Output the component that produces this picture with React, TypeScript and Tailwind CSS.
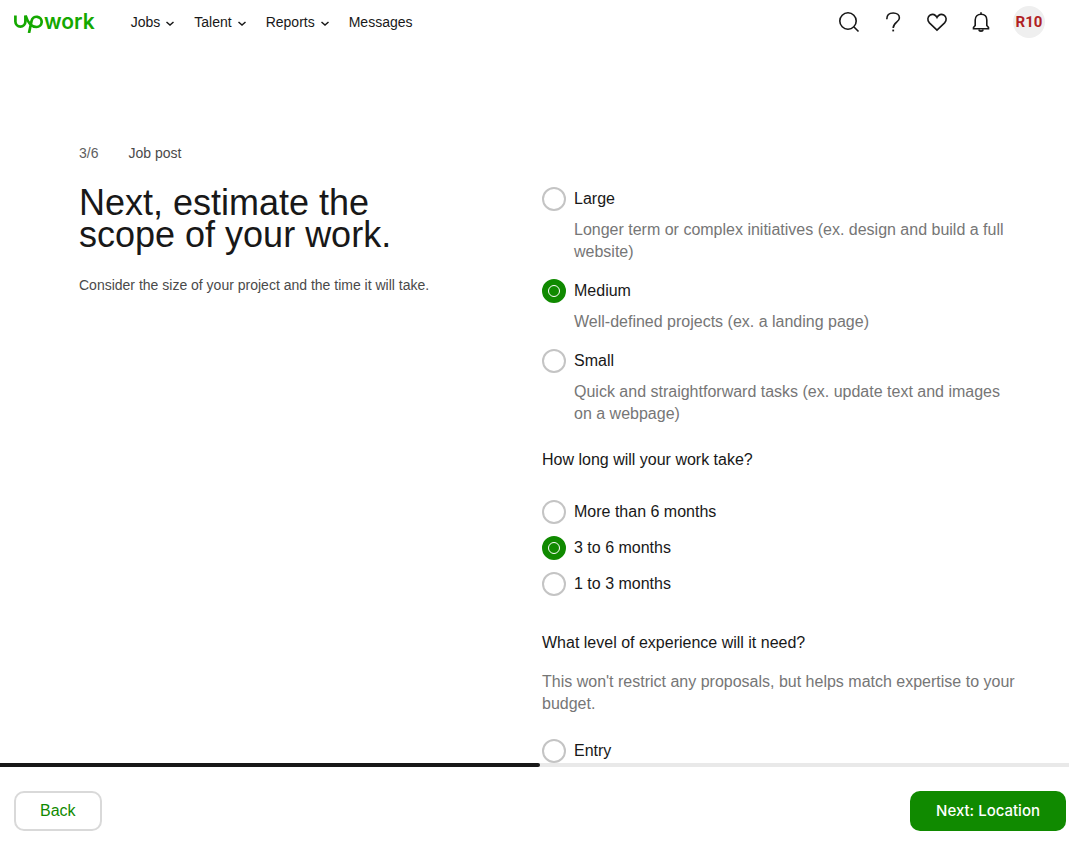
import { useState } from "react";

type Option = { value: string; label: string; description?: string };

const sizes: Option[] = [
  { value: "large", label: "Large", description: "Longer term or complex initiatives (ex. design and build a full website)" },
  { value: "medium", label: "Medium", description: "Well-defined projects (ex. a landing page)" },
  { value: "small", label: "Small", description: "Quick and straightforward tasks (ex. update text and images on a webpage)" },
];

const durations: Option[] = [
  { value: "6plus", label: "More than 6 months" },
  { value: "3to6", label: "3 to 6 months" },
  { value: "1to3", label: "1 to 3 months" },
];

const levels: Option[] = [{ value: "entry", label: "Entry" }];

function RadioGroup({
  name,
  legend,
  options,
  value,
  onChange,
  className,
}: {
  name: string;
  legend: string;
  options: Option[];
  value: string;
  onChange: (value: string) => void;
  className: string;
}) {
  return (
    <div role="radiogroup" aria-label={legend} className={className}>
      {options.map((option) => (
        <div key={option.value}>
          <label className="flex items-center gap-2 text-base leading-6">
            <span className="grid size-6 shrink-0">
              <input
                type="radio"
                name={name}
                value={option.value}
                checked={value === option.value}
                onChange={() => onChange(option.value)}
                className="col-start-1 row-start-1 size-6 appearance-none rounded-full border-2 border-[#c4c4c4] bg-white checked:border-[#108a00] checked:bg-[#108a00]"
              />
              {value === option.value && (
                <span className="pointer-events-none col-start-1 row-start-1 size-3 place-self-center rounded-full border border-white" />
              )}
            </span>
            {option.label}
          </label>
          {option.description && (
            <p className="mt-2 pl-8 text-base leading-[22px] text-[#767676]">{option.description}</p>
          )}
        </div>
      ))}
    </div>
  );
}

function Chevron() {
  return (
    <svg viewBox="0 0 8 6" className="mt-1 h-1.5 w-2" fill="none" stroke="currentColor" strokeWidth="1.5" aria-hidden="true">
      <path d="M0.5 1 L4 4 L7.5 1" />
    </svg>
  );
}

function BrandMark() {
  return (
    <svg viewBox="0 0 30 18" className="mt-1 h-[18px] w-[30px]" fill="none" stroke="currentColor" strokeWidth="2.7" aria-hidden="true">
      <path d="M1.4 0.6 V6.6 A5 5 0 0 0 11.4 6.6 V0.6" />
      <path d="M11.6 0.6 C13.4 6.4 17 12 22.6 12 A5.1 5.1 0 1 0 17.6 5.8 L15 18" />
    </svg>
  );
}

const iconProps = {
  viewBox: "0 0 24 24",
  className: "size-6",
  fill: "none",
  stroke: "currentColor",
  strokeWidth: 1.6,
  "aria-hidden": true,
} as const;

export default function App() {
  const [size, setSize] = useState("medium");
  const [duration, setDuration] = useState("3to6");
  const [level, setLevel] = useState("");

  return (
    <div className="flex min-h-screen flex-col bg-white font-['Liberation_Sans',Arial,sans-serif] text-[#181818]">
      <header className="flex h-11 items-center justify-between pr-6 pl-3.5">
        <div className="flex items-center gap-9">
          <a href="#" aria-label="upwork" className="flex items-center text-[#14a800]">
            <BrandMark />
            <span className="font-['Inter',sans-serif] text-[21px] leading-6 font-semibold">work</span>
          </a>
          <nav className="flex items-center gap-5 text-sm leading-5">
            {["Jobs", "Talent", "Reports"].map((item) => (
              <button key={item} type="button" className="flex items-center gap-1.5">
                {item}
                <Chevron />
              </button>
            ))}
            <a href="#">Messages</a>
          </nav>
        </div>
        <div className="flex items-center gap-5">
          <button type="button" aria-label="Search">
            <svg {...iconProps}>
              <circle cx="11" cy="11" r="8.2" />
              <path d="M17 17 L21.5 21.5" />
            </svg>
          </button>
          <button type="button" aria-label="Help">
            <svg {...iconProps}>
              <path d="M5.8 9.2 C5.8 5.2 8.4 3 12.2 3 C16 3 18.4 5.2 18.4 8 C18.4 12 12.2 12.6 12.2 18" />
              <path d="M12.2 19.6 V21.4" strokeWidth="1.8" />
            </svg>
          </button>
          <button type="button" aria-label="Saved">
            <svg {...iconProps}>
              <path d="M12 20.2 L4.4 12.9 C1.9 10.3 2.6 6.4 5.2 5 C7.8 3.6 10.6 4.6 12 7.4 C13.4 4.6 16.2 3.6 18.8 5 C21.4 6.4 22.1 10.3 19.6 12.9 Z" />
            </svg>
          </button>
          <button type="button" aria-label="Notifications">
            <svg {...iconProps}>
              <path d="M4.5 18.8 V17.6 L6.2 15.4 V10 C6.2 6.4 8.6 4.2 12 4.2 C15.4 4.2 17.8 6.4 17.8 10 V15.4 L19.5 17.6 V18.8 Z" />
              <path d="M12 2.2 V4.2 M9.8 19.5 C10.2 21.6 13.8 21.6 14.2 19.5" />
            </svg>
          </button>
          <button
            type="button"
            aria-label="Account"
            className="grid size-8 place-items-center rounded-full bg-[#efefef] font-['Roboto',sans-serif] text-[15px] leading-5 font-bold text-[#b01f24]"
          >
            R10
          </button>
        </div>
      </header>

      <main className="grid flex-1 grid-cols-[463fr_475fr] pt-[97px] pr-[52px] pl-[79px]">
        <section className="flex flex-col pr-12">
          <p className="flex gap-[30px] text-sm leading-6 text-[#5e5e5e]">
            <span>3/6</span>
            <span className="text-[#4a4a4a]">Job post</span>
          </p>
          <h1 className="mt-[22px] text-4xl leading-8">
            Next, estimate the
            <br />
            scope of your work.
          </h1>
          <p className="mt-[22px] text-sm leading-6 whitespace-nowrap text-[#4a4a4a]">
            Consider the size of your project and the time it will take.
          </p>
        </section>
        <form className="flex flex-col pt-[46px]">
          <RadioGroup name="size" legend="Project scope" options={sizes} value={size} onChange={setSize} className="flex flex-col gap-4" />
          <h2 className="mt-[23px] text-base leading-6">How long will your work take?</h2>
          <RadioGroup name="duration" legend="Duration" options={durations} value={duration} onChange={setDuration} className="mt-7 flex flex-col gap-3" />
          <h2 className="mt-[35px] text-base leading-6">What level of experience will it need?</h2>
          <p className="mt-4 text-base leading-[22px] text-[#767676]">
            This won't restrict any proposals, but helps match expertise to your budget.
          </p>
          <RadioGroup name="level" legend="Experience level" options={levels} value={level} onChange={setLevel} className="mt-6" />
        </form>
      </main>

      <footer className="sticky bottom-0 bg-white">
        <div role="progressbar" aria-label="Job post progress" aria-valuenow={3} aria-valuemax={6} className="h-1 bg-[#e9e9e9]">
          <div className="h-1 w-[50.5%] rounded-r-sm bg-[#181818]" />
        </div>
        <div className="flex justify-between pt-6 pr-[3px] pb-[17px] pl-3.5">
          <button type="button" className="h-10 rounded-[10px] border-2 border-[#d9d9d9] px-6 text-base text-[#108a00]">
            Back
          </button>
          <button type="button" className="h-10 rounded-[10px] bg-[#108a00] px-[26px] font-['Inter',sans-serif] text-[15px] font-medium text-white">
            Next: Location
          </button>
        </div>
      </footer>
    </div>
  );
}
